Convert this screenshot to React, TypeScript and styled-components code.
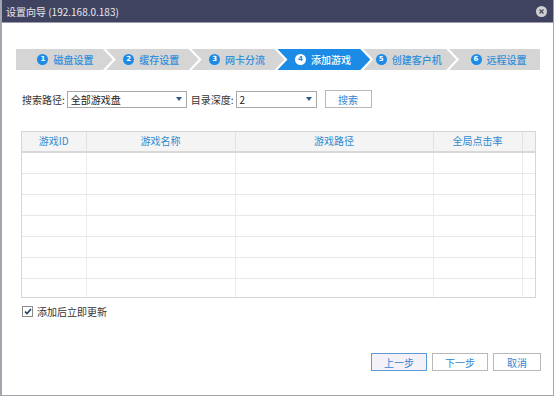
import React from "react";
import styled, { createGlobalStyle } from "styled-components";

const Global = createGlobalStyle`
  html, body { margin: 0; padding: 0; background: #ffffff; }
  body { font-family: "Noto Sans CJK SC", "Noto Sans", sans-serif; }
  * { box-sizing: border-box; }
`;

const Window = styled.div`
  width: 554px;
  height: 396px;
  display: flex;
  flex-direction: column;
  background: #ffffff;
  border: 1px solid #a4a4ac;
  border-top: none;
  border-left-width: 2px;
  overflow: hidden;
`;

const TitleBar = styled.div`
  height: 23px;
  margin-left: -2px;
  margin-right: -1px;
  background: #40435f;
  border-bottom: 1px solid #9c9cac;
  display: flex;
  align-items: center;
  justify-content: space-between;
  padding: 0 7px 0 6px;
  color: #e8e8f0;
  font-size: 10px;
`;

const CloseButton = styled.div`
  width: 11px;
  height: 11px;
  border-radius: 50%;
  background: #cfcfd4;
  display: flex;
  align-items: center;
  justify-content: center;
`;

const Content = styled.div`
  flex: 1;
  display: flex;
  flex-direction: column;
  padding: 26px 12px 0 14px;
`;

const Steps = styled.div`
  display: flex;
  width: 524px;
  height: 21px;
`;

const Step = styled.div<{ $active?: boolean; $pos: "first" | "mid" | "last" }>`
  flex: 1 0 0;
  height: 21px;
  margin-left: ${(p) => (p.$pos === "first" ? "0" : "-7px")};
  background: ${(p) => (p.$active ? "#1c8be6" : "#d5d5d5")};
  color: ${(p) => (p.$active ? "#ffffff" : "#2f8fdc")};
  clip-path: ${(p) =>
    p.$pos === "first"
      ? "polygon(0 0, calc(100% - 10px) 0, 100% 50%, calc(100% - 10px) 100%, 0 100%)"
      : p.$pos === "last"
      ? "polygon(0 0, 100% 0, 100% 100%, 0 100%, 10px 50%)"
      : "polygon(0 0, calc(100% - 10px) 0, 100% 50%, calc(100% - 10px) 100%, 0 100%, 10px 50%)"};
  display: flex;
  align-items: center;
  justify-content: center;
  gap: 5px;
  padding-left: ${(p) => (p.$pos === "first" ? "8px" : p.$pos === "last" ? "8px" : "4px")};
  padding-right: ${(p) => (p.$pos === "last" ? "0" : "6px")};
  font-size: 10px;
  font-weight: 500;
`;

const StepNum = styled.span<{ $active?: boolean }>`
  width: 11px;
  height: 11px;
  border-radius: 50%;
  background: ${(p) => (p.$active ? "#ffffff" : "#1c8be6")};
  color: ${(p) => (p.$active ? "#1c8be6" : "#ffffff")};
  font-family: "DejaVu Sans", sans-serif;
  font-size: 7px;
  font-weight: 700;
  display: flex;
  align-items: center;
  justify-content: center;
  line-height: 1;
`;

const SearchRow = styled.div`
  display: flex;
  align-items: center;
  margin-top: 20px;
  padding-left: 6px;
  height: 18px;
  font-size: 10px;
  color: #333333;
`;

const Label = styled.span`
  margin-right: 2px;
  white-space: nowrap;
`;

const Select = styled.div<{ $w: number }>`
  width: ${(p) => p.$w}px;
  height: 17px;
  border: 1px solid #a8a8a8;
  background: #ffffff;
  display: flex;
  align-items: center;
  justify-content: space-between;
  padding: 0 4px 0 3px;
  margin-right: 4px;
  font-size: 10px;
  color: #222222;
`;

const Caret = styled.span`
  width: 0;
  height: 0;
  border-left: 3.5px solid transparent;
  border-right: 3.5px solid transparent;
  border-top: 4px solid #2a5a8a;
`;

const Button = styled.button<{ $primary?: boolean; $w: number }>`
  width: ${(p) => p.$w}px;
  height: 18px;
  border: 1px solid ${(p) => (p.$primary ? "#5d9bd4" : "#b8b8b8")};
  background: ${(p) => (p.$primary ? "#f5f1f8" : "#ffffff")};
  color: #2f86d2;
  font-family: "Noto Sans CJK SC", sans-serif;
  font-size: 10px;
  padding: 0;
  display: flex;
  align-items: center;
  justify-content: center;
`;

const SearchButton = styled(Button)`
  margin-left: 4px;
`;

const TableBox = styled.div`
  margin-top: 23px;
  margin-left: 5px;
  width: 515px;
  height: 167px;
  border: 1px solid #d6d6d6;
  overflow: hidden;
`;

const Table = styled.table`
  border-collapse: collapse;
  table-layout: fixed;
  width: 513px;
  font-size: 10px;
`;

const Th = styled.th<{ $w: number }>`
  width: ${(p) => p.$w}px;
  height: 20px;
  background: #f4f4f4;
  border-right: 1px solid #e2e2e2;
  border-bottom: 2px solid #d8d8d8;
  color: #2f8ad0;
  font-weight: 400;
  padding: 0 0 2px;
  text-align: center;
  &:last-child { border-right: none; }
`;

const Td = styled.td`
  height: 21px;
  border-right: 1px solid #ececec;
  border-bottom: 1px solid #e8e8e8;
  padding: 0;
  &:last-child { border-right: none; }
`;

const CheckRow = styled.label`
  display: flex;
  align-items: center;
  gap: 4px;
  margin-top: 6px;
  margin-left: 6px;
  font-size: 10px;
  color: #333333;
`;

const CheckBox = styled.span`
  width: 11px;
  height: 11px;
  border: 1px solid #8a8a8a;
  background: #ffffff;
  display: flex;
  align-items: center;
  justify-content: center;
`;

const Footer = styled.div`
  display: flex;
  justify-content: flex-end;
  gap: 5px;
  margin-top: 34px;
  padding-right: 0;
`;

const steps = ["磁盘设置", "缓存设置", "网卡分流", "添加游戏", "创建客户机", "远程设置"];
const cols: [string, number][] = [
  ["游戏ID", 64],
  ["游戏名称", 149],
  ["游戏路径", 198],
  ["全局点击率", 89],
  ["", 13],
];

export default function App() {
  return (
    <>
      <Global />
      <Window>
        <TitleBar>
          <span>设置向导 (192.168.0.183)</span>
          <CloseButton>
            <svg width="5" height="5" viewBox="0 0 5 5">
              <path d="M0.5 0.5 L4.5 4.5 M4.5 0.5 L0.5 4.5" stroke="#4a4a5a" strokeWidth="1.3" />
            </svg>
          </CloseButton>
        </TitleBar>
        <Content>
          <Steps>
            {steps.map((s, i) => (
              <Step
                key={s}
                $active={i === 3}
                $pos={i === 0 ? "first" : i === steps.length - 1 ? "last" : "mid"}
              >
                <StepNum $active={i === 3}>{i + 1}</StepNum>
                <span>{s}</span>
              </Step>
            ))}
          </Steps>
          <SearchRow>
            <Label>搜索路径:</Label>
            <Select $w={120}>
              <span>全部游戏盘</span>
              <Caret />
            </Select>
            <Label>目录深度:</Label>
            <Select $w={81}>
              <span>2</span>
              <Caret />
            </Select>
            <SearchButton $w={47}>搜索</SearchButton>
          </SearchRow>
          <TableBox>
            <Table>
              <thead>
                <tr>
                  {cols.map(([c, w], i) => (
                    <Th key={i} $w={w}>{c}</Th>
                  ))}
                </tr>
              </thead>
              <tbody>
                {Array.from({ length: 7 }).map((_, r) => (
                  <tr key={r}>
                    {cols.map((_c, i) => (
                      <Td key={i} />
                    ))}
                  </tr>
                ))}
              </tbody>
            </Table>
          </TableBox>
          <CheckRow>
            <CheckBox>
              <svg width="8" height="7" viewBox="0 0 8 7">
                <path d="M1 3.5 L3 5.5 L7 1" stroke="#1f3f6a" strokeWidth="1.6" fill="none" />
              </svg>
            </CheckBox>
            <span>添加后立即更新</span>
          </CheckRow>
          <Footer>
            <Button $primary $w={56}>上一步</Button>
            <Button $w={56}>下一步</Button>
            <Button $w={48}>取消</Button>
          </Footer>
        </Content>
      </Window>
    </>
  );
}
